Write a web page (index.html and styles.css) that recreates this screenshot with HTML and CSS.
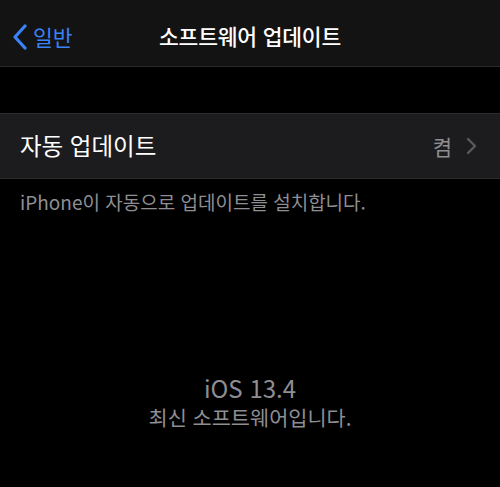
FILE: index.html
```html
<!DOCTYPE html>
<html lang="ko">
<head>
<meta charset="utf-8">
<link rel="stylesheet" href="styles.css">
</head>
<body>
<div class="screen">
  <header class="nav">
    <div class="back">
      <svg class="back-chev" width="16" height="26" viewBox="0 0 16 26"><path d="M13 2 L3 13 L13 24" fill="none" stroke="#3a82f7" stroke-width="3.2" stroke-linecap="round" stroke-linejoin="round"/></svg>
      <span class="back-label">일반</span>
    </div>
    <div class="title">소프트웨어 업데이트</div>
  </header>
  <div class="spacer"></div>
  <div class="row">
    <span class="row-label">자동 업데이트</span>
    <span class="row-value">켬
      <svg class="row-chev" width="12" height="18" viewBox="0 0 12 18"><path d="M2 2 L9 9 L2 16" fill="none" stroke="#5a5a5e" stroke-width="2.4" stroke-linecap="round" stroke-linejoin="round"/></svg>
    </span>
  </div>
  <p class="footer">iPhone이 자동으로 업데이트를 설치합니다.</p>
  <div class="version">
    <div class="ver">iOS 13.4</div>
    <div class="ver-sub">최신 소프트웨어입니다.</div>
  </div>
</div>
</body>
</html>
```
FILE: styles.css
```css
* { box-sizing: border-box; }
html, body { margin: 0; padding: 0; background: #000; }
body {
  font-family: "Noto Sans CJK KR", "Noto Sans", sans-serif;
  width: 500px; height: 487px; overflow: hidden;
}
.screen { display: flex; flex-direction: column; height: 487px; }
.nav {
  height: 67px;
  background: #131313;
  border-bottom: 1px solid #2a2a2b;
  position: relative;
  display: flex; align-items: center; justify-content: center;
}
.back {
  position: absolute; left: 12px; top: 24px;
  display: flex; align-items: center; gap: 5px;
  color: #3a82f7;
}
.back-chev { display: block; }
.back-label { font-size: 21.5px; line-height: 26px; }
.title { color: #fff; font-size: 21.5px; font-weight: 500; line-height: 26px; margin-top: 6px; letter-spacing: -0.2px; }
.spacer { height: 46px; }
.row {
  height: 66px;
  background: #1c1c1e;
  border-top: 1px solid #2c2c2e;
  border-bottom: 1px solid #2c2c2e;
  display: flex; align-items: center; justify-content: space-between;
  padding: 0 22px 0 20px;
}
.row-label { color: #fff; font-size: 23.5px; line-height: 30px; margin-top: -3px; }
.row-value { color: #8e8e93; font-size: 21px; display: flex; align-items: center; gap: 14px; }
.row-chev { display: block; }
.footer { margin: 11px 0 0 20px; color: #8e8e93; font-size: 19px; line-height: 24px; }
.version { margin-top: 159px; text-align: center; color: #8e8e93; }
.ver { font-size: 24px; line-height: 30px; }
.ver-sub { font-size: 20.8px; line-height: 28px; }
```
